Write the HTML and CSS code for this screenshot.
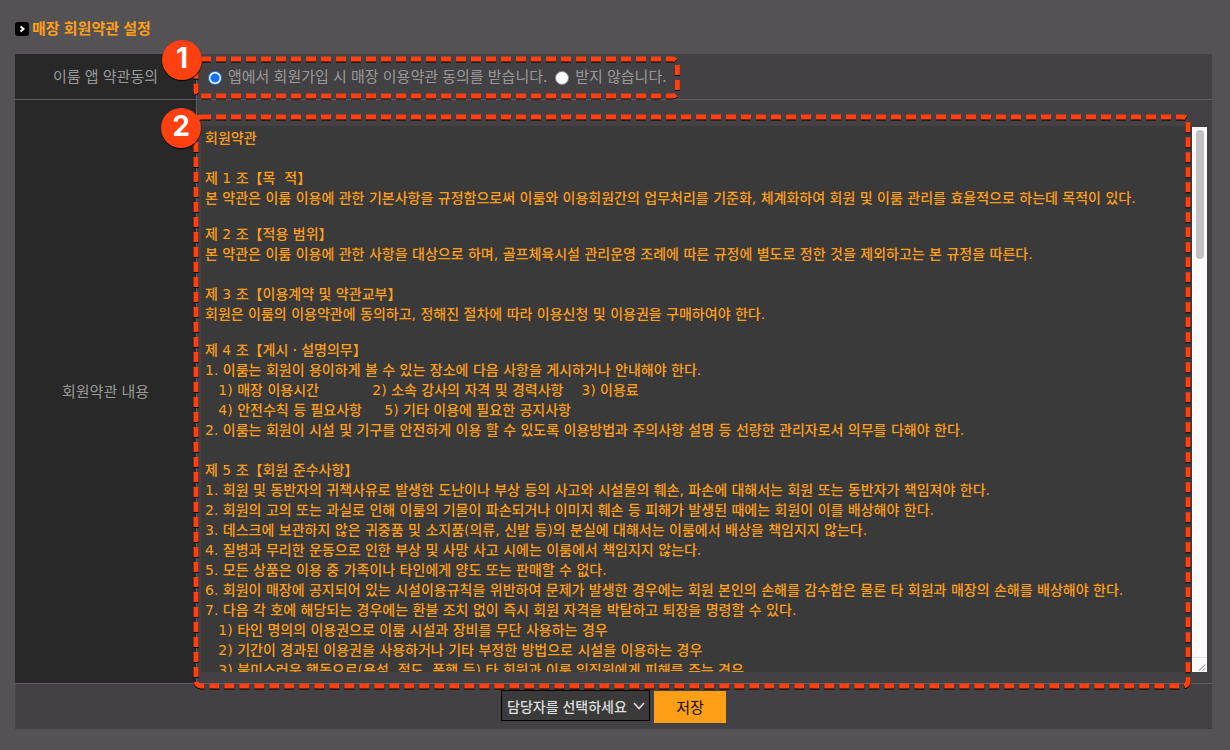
FILE: index.html
```
<!DOCTYPE html>
<html lang="ko">

<head>
    <meta charset="UTF-8">
    <meta name="viewport" content="width=device-width, initial-scale=1.0">
    <title>매장 회원약관 설정</title>
    <link rel="stylesheet" href="styles.css">
</head>

<body>
    <h1 class="title">
        <svg class="title_icon" viewBox="0 0 14 14">
            <rect width="14" height="14" rx="3" fill="#000" />
            <path d="M5.5 4.5 L8.5 7 L5.5 9.5" fill="none" stroke="#fff" stroke-width="2" />
        </svg>
        매장 회원약관 설정
    </h1>

    <form>
        <table class="settings">
            <tr class="agree_row">
                <th scope="row">이룸 앱 약관동의</th>
                <td>
                    <div class="agree">
                        <input type="radio" name="agree" id="agree_yes" checked>
                        <label for="agree_yes">앱에서 회원가입 시 매장 이용약관 동의를 받습니다.</label>
                        <input type="radio" name="agree" id="agree_no">
                        <label for="agree_no">받지 않습니다.</label>
                        <svg class="mark mark_agree">
                            <rect width="100%" height="100%" rx="5" />
                        </svg>
                        <span class="badge badge_agree">1</span>
                    </div>
                </td>
            </tr>
            <tr class="terms_row">
                <th scope="row"><label for="terms">회원약관 내용</label></th>
                <td>
                    <div class="terms_box">
                        <textarea id="terms" spellcheck="false">회원약관
&#12288;
제 1 조【목  적】
본 약관은 이룸 이용에 관한 기본사항을 규정함으로써 이룸와 이용회원간의 업무처리를 기준화, 체계화하여 회원 및 이룸 관리를 효율적으로 하는데 목적이 있다.

제 2 조【적용 범위】
본 약관은 이룸 이용에 관한 사항을 대상으로 하며, 골프체육시설 관리운영 조례에 따른 규정에 별도로 정한 것을 제외하고는 본 규정을 따른다.
&#12288;
제 3 조【이용계약 및 약관교부】
회원은 이룸의 이용약관에 동의하고, 정해진 절차에 따라 이용신청 및 이용권을 구매하여야 한다.

제 4 조【게시ㆍ설명의무】
1. 이룸는 회원이 용이하게 볼 수 있는 장소에 다음 사항을 게시하거나 안내해야 한다.
   1) 매장 이용시간            2) 소속 강사의 자격 및 경력사항    3) 이용료
   4) 안전수칙 등 필요사항     5) 기타 이용에 필요한 공지사항
2. 이룸는 회원이 시설 및 기구를 안전하게 이용 할 수 있도록 이용방법과 주의사항 설명 등 선량한 관리자로서 의무를 다해야 한다.
&#12288;
제 5 조【회원 준수사항】
1. 회원 및 동반자의 귀책사유로 발생한 도난이나 부상 등의 사고와 시설물의 훼손, 파손에 대해서는 회원 또는 동반자가 책임져야 한다.
2. 회원의 고의 또는 과실로 인해 이룸의 기물이 파손되거나 이미지 훼손 등 피해가 발생된 때에는 회원이 이를 배상해야 한다.
3. 데스크에 보관하지 않은 귀중품 및 소지품(의류, 신발 등)의 분실에 대해서는 이룸에서 배상을 책임지지 않는다.
4. 질병과 무리한 운동으로 인한 부상 및 사망 사고 시에는 이룸에서 책임지지 않는다.
5. 모든 상품은 이용 중 가족이나 타인에게 양도 또는 판매할 수 없다.
6. 회원이 매장에 공지되어 있는 시설이용규칙을 위반하여 문제가 발생한 경우에는 회원 본인의 손해를 감수함은 물론 타 회원과 매장의 손해를 배상해야 한다.
7. 다음 각 호에 해당되는 경우에는 환불 조치 없이 즉시 회원 자격을 박탈하고 퇴장을 명령할 수 있다.
   1) 타인 명의의 이용권으로 이룸 시설과 장비를 무단 사용하는 경우
   2) 기간이 경과된 이용권을 사용하거나 기타 부정한 방법으로 시설을 이용하는 경우
   3) 불미스러운 행동으로(욕설, 절도, 폭행 등) 타 회원과 이룸 임직원에게 피해를 주는 경우
</textarea>
                        <div class="scrollbar">
                            <div class="thumb"></div>
                            <svg class="grip" viewBox="0 0 15 15">
                                <path d="M7 13.5 L13.5 7 M11 13.5 L13.5 11" stroke="#666" />
                            </svg>
                        </div>
                        <svg class="mark mark_terms">
                            <rect width="100%" height="100%" rx="5" />
                        </svg>
                        <span class="badge badge_terms">2</span>
                    </div>
                </td>
            </tr>
            <tr class="save_row">
                <td colspan="2">
                    <div class="save">
                        <div class="manager">
                            <select aria-label="담당자">
                                <option>담당자를 선택하세요</option>
                            </select>
                            <svg class="arrow" viewBox="0 0 12 8">
                                <path d="M1 1 L6 6.5 L11 1" fill="none" stroke="#ddd" stroke-width="1.6" />
                            </svg>
                        </div>
                        <button type="button" class="save_btn">저장</button>
                    </div>
                </td>
            </tr>
        </table>
    </form>
</body>

</html>
```
FILE: styles.css
```
* {
    box-sizing: border-box;
}

body {
    margin: 0;
    padding: 16px 18px 20px 15px;
    background-color: #545255;
    color: #999;
    font-family: 'Noto Sans CJK KR', sans-serif;
    font-size: 15px;
}

.title {
    display: flex;
    align-items: center;
    gap: 3px;
    margin: 0 0 14px;
    color: #ff9f17;
    font-size: 15px;
    font-weight: bold;
    line-height: 24px;
}

.title_icon {
    width: 14px;
    height: 14px;
    margin-top: 2px;
}

.settings {
    width: 100%;
    border-collapse: separate;
    border-spacing: 0;
    background-color: #434143;
}

th,
td {
    padding: 0;
    border-bottom: 1px solid #605e60;
}

th {
    width: 182px;
    padding-bottom: 2px;
    background-color: #282828;
    border-right: 1px solid #605e60;
    font-weight: normal;
}

.agree_row {
    height: 46px;
}

.save_row td {
    height: 45px;
    border-bottom: 0;
}

.agree {
    position: relative;
    display: inline-flex;
    align-items: center;
    height: 45px;
    padding: 0 0 2px 11px;
    vertical-align: top;
}

.agree label {
    margin: 0 8px 0 6px;
    line-height: 22px;
}

.agree input {
    appearance: none;
    width: 14px;
    height: 14px;
    margin: 4px 0 0;
    border-radius: 50%;
    background-color: #fff;
    border: 1px solid #888;
}

.agree input:checked {
    border: 1px solid #1473fb;
    background: radial-gradient(#1473fb 4px, #fff 5px);
}

/* dashed guides and their numbers */
.mark {
    position: absolute;
    overflow: visible;
    pointer-events: none;
    filter: drop-shadow(0 1px 0 #000);
}

.mark rect {
    fill: none;
    stroke: #ff4011;
    stroke-width: 5;
    stroke-dasharray: 10 5;
}

.mark_agree {
    top: 5px;
    left: -1px;
    width: calc(100% + 4px);
    height: 37px;
}

.mark_terms {
    top: 17px;
    left: -1px;
    width: calc(100% - 23px);
    height: calc(100% - 14px);
}

.badge {
    position: absolute;
    width: 40px;
    height: 40px;
    border-radius: 50%;
    background-color: #ff4011;
    box-shadow: 0 1px 1px #000;
    color: #fff;
    font: bold 28px/37px Inter, sans-serif;
    text-align: center;
}

.badge_agree {
    top: -14px;
    left: -35px;
}

.badge_terms {
    top: 8px;
    left: -36px;
}

.terms_box {
    position: relative;
    padding: 26px 5px 11px 4px;
}

textarea {
    display: block;
    width: 100%;
    height: 546px;
    padding: 1px 19px 1px 4px;
    border: 0;
    outline: 0;
    resize: none;
    background-color: #3a3a3a;
    color: #ff9f17;
    font-family: 'DejaVu Sans', 'Noto Sans CJK KR', sans-serif;
    font-size: 14px;
    font-weight: 500;
}

textarea::-webkit-scrollbar {
    display: none;
}

.scrollbar {
    position: absolute;
    top: 27px;
    right: 5px;
    bottom: 11px;
    width: 15px;
    background-color: #fafafa;
}

.thumb {
    width: 8px;
    height: 129px;
    margin: 3px 0 0 4px;
    border-radius: 4px;
    background-color: #c1c1c1;
}

.grip {
    position: absolute;
    bottom: 0;
    left: 0;
    width: 15px;
    height: 15px;
    border-top: 1px solid #ddd;
}

.save {
    display: flex;
    align-items: flex-end;
    justify-content: center;
    gap: 4px;
}

.manager {
    position: relative;
    height: 33px;
}

select {
    appearance: none;
    width: 149px;
    height: 31px;
    padding: 0 5px;
    border: 1px solid #000;
    border-radius: 0;
    background-color: #3a3a3a;
    color: #ddd;
    font-family: 'Noto Sans CJK KR', sans-serif;
    font-size: 14px;
    font-weight: 500;
}

.arrow {
    position: absolute;
    top: 12px;
    right: 5px;
    width: 12px;
    height: 8px;
    pointer-events: none;
}

.save_btn {
    width: 72px;
    height: 32px;
    padding: 0 0 2px;
    border: 0;
    background-color: #ff9f17;
    color: #111;
    font-family: 'Noto Sans CJK KR', sans-serif;
    font-size: 15px;
}
```
